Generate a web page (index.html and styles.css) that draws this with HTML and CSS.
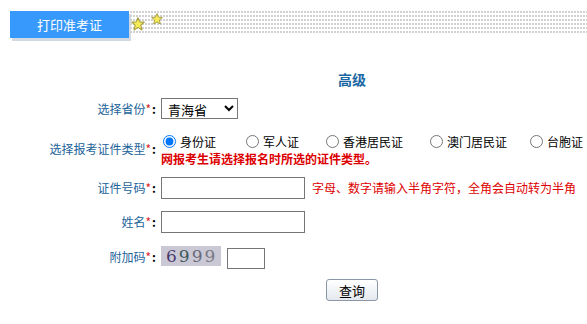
FILE: index.html
```html
<!DOCTYPE html>
<html lang="zh-CN">
<head>
  <meta charset="UTF-8" />
  <title>打印准考证</title>
  <link rel="stylesheet" href="styles.css">
</head>
<body>
  <div class="top">
    <div class="tab">打印准考证</div>
    <div class="dots">
      <svg class="star star-a" width="14" height="14" viewBox="0 0 20 20"><polygon points="10,1 12.6,7 19,7.4 14,11.6 15.6,18.5 10,14.8 4.4,18.5 6,11.6 1,7.4 7.4,7" fill="#f6ec5a" stroke="#a8a040" stroke-width="1.6" stroke-linejoin="round"/></svg>
      <svg class="star star-b" width="12" height="12" viewBox="0 0 20 20"><polygon points="10,1 12.6,7 19,7.4 14,11.6 15.6,18.5 10,14.8 4.4,18.5 6,11.6 1,7.4 7.4,7" fill="#f6ec5a" stroke="#a8a040" stroke-width="1.6" stroke-linejoin="round"/></svg>
    </div>
  </div>

  <h2 class="level">高级</h2>

  <form class="query-form">
    <div class="row row-select">
      <label class="lbl">选择省份<span class="req">*</span><span class="colon">:</span></label>
      <div class="field">
        <select class="province">
          <option>青海省</option>
        </select>
      </div>
    </div>

    <div class="row row-type">
      <label class="lbl">选择报考证件类型<span class="req">*</span><span class="colon">:</span></label>
      <div class="field">
        <div class="radios">
          <label class="opt o1"><input type="radio" name="idtype" checked>身份证</label>
          <label class="opt o2"><input type="radio" name="idtype">军人证</label>
          <label class="opt o3"><input type="radio" name="idtype">香港居民证</label>
          <label class="opt o4"><input type="radio" name="idtype">澳门居民证</label>
          <label class="opt o5"><input type="radio" name="idtype">台胞证</label>
        </div>
        <div class="warn">网报考生请选择报名时所选的证件类型。</div>
      </div>
    </div>

    <div class="row row-input">
      <label class="lbl">证件号码<span class="req">*</span><span class="colon">:</span></label>
      <div class="field inline">
        <input type="text" class="txt">
        <span class="hint">字母、数字请输入半角字符，全角会自动转为半角</span>
      </div>
    </div>

    <div class="row row-input">
      <label class="lbl">姓名<span class="req">*</span><span class="colon">:</span></label>
      <div class="field">
        <input type="text" class="txt">
      </div>
    </div>

    <div class="row row-code">
      <label class="lbl">附加码<span class="req">*</span><span class="colon">:</span></label>
      <div class="field inline">
        <div class="captcha"><span class="d1">6</span><span class="d2">9</span><span class="d3">9</span><span class="d4">9</span></div>
        <input type="text" class="code">
      </div>
    </div>

    <div class="actions">
      <button type="button" class="btn">查询</button>
    </div>
  </form>
</body>
</html>
```

FILE: styles.css
```css
body {
  margin: 0;
  font-family: "Noto Sans CJK SC", "Liberation Sans", sans-serif;
  font-size: 12px;
  background: #fff;
  color: #000;
}
.top {
  display: flex;
  align-items: flex-start;
  padding-top: 11px;
  height: 30px;
}
.tab {
  flex-shrink: 0;
  margin-left: 10px;
  width: 119px;
  height: 27px;
  line-height: 27px;
  background: #3799fb;
  color: #fff;
  font-size: 13px;
  text-align: center;
  box-shadow: 2px 3px 0 #d3d9e3;
}
.dots {
  flex: 1;
  height: 22px;
  margin-left: 1px;
  background-image: radial-gradient(circle at 1px 1px, #d0d0d0 0.7px, transparent 0.9px);
  background-size: 3px 4px;
  display: flex;
  align-items: flex-start;
}
.star-a {
  margin-left: 1px;
  margin-top: 6px;
}
.star-b {
  margin-left: 6px;
  margin-top: 2px;
}
.level {
  margin: 29px 0 0 338px;
  font-size: 14px;
  line-height: 18px;
  color: #1a68a3;
  font-weight: bold;
}
.query-form {
  margin-top: 9px;
}
.row {
  display: flex;
  align-items: center;
}
.lbl {
  flex-shrink: 0;
  width: 156px;
  padding-right: 5px;
  text-align: right;
  color: #1c639a;
  white-space: nowrap;
}
.req {
  color: #e0202a;
}
.colon {
  color: #000;
  font-weight: bold;
  margin-left: 1px;
}
.field {
  flex: 1;
  min-width: 0;
}
.field.inline {
  display: flex;
  align-items: center;
  white-space: nowrap;
}
.row-select {
  height: 22px;
}
.province {
  width: 77px;
  height: 21px;
  font-family: inherit;
  font-size: 13px;
  border: 1px solid #767676;
  border-radius: 0;
  background: #fff;
  padding: 0 2px;
}
.row-type {
  margin-top: 14px;
  align-items: flex-start;
}
.row-type .lbl {
  margin-top: 7px;
}
.radios {
  display: flex;
  height: 16px;
  align-items: center;
  white-space: nowrap;
}
.opt {
  display: flex;
  align-items: center;
  flex-shrink: 0;
}
.opt input {
  margin: 0 4px 0 0;
  width: 13px;
  height: 13px;
}
.o1 { margin-left: 2px; }
.o2 { margin-left: 30px; }
.o3 { margin-left: 27px; }
.o4 { margin-left: 27px; }
.o5 { margin-left: 23px; }
.warn {
  margin-top: 2px;
  color: #dd0000;
  font-weight: bold;
  line-height: 16px;
  white-space: nowrap;
}
.row-input {
  margin-top: 11px;
  height: 23px;
}
.row-type + .row-input {
  margin-top: 9px;
}
.txt {
  width: 144px;
  height: 22px;
  box-sizing: border-box;
  border: 1px solid #767676;
  margin: 0;
}
.hint {
  margin-left: 7px;
  color: #dd0000;
}
.row-code {
  margin-top: 10px;
  height: 26px;
}
.captcha {
  width: 60px;
  height: 20px;
  line-height: 20px;
  background: #cbc8d6;
  font-family: "DejaVu Serif", serif;
  font-size: 17px;
  letter-spacing: 2px;
  text-indent: 5px;
  overflow: hidden;
}
.d1 { color: #4b3a6e; }
.d2 { color: #3d5a5a; }
.d3 { color: #6a6a7a; }
.d4 { color: #7a7a84; }
.code {
  width: 38px;
  height: 21px;
  box-sizing: border-box;
  border: 1px solid #767676;
  margin: 5px 0 0 6px;
}
.actions {
  margin: 10px 0 0 326px;
}
.btn {
  width: 52px;
  height: 22px;
  font-family: inherit;
  font-size: 13px;
  border: 1px solid #8a97a8;
  border-radius: 3px;
  background: linear-gradient(#ffffff, #e4e8ee);
  padding: 0;
}
```
